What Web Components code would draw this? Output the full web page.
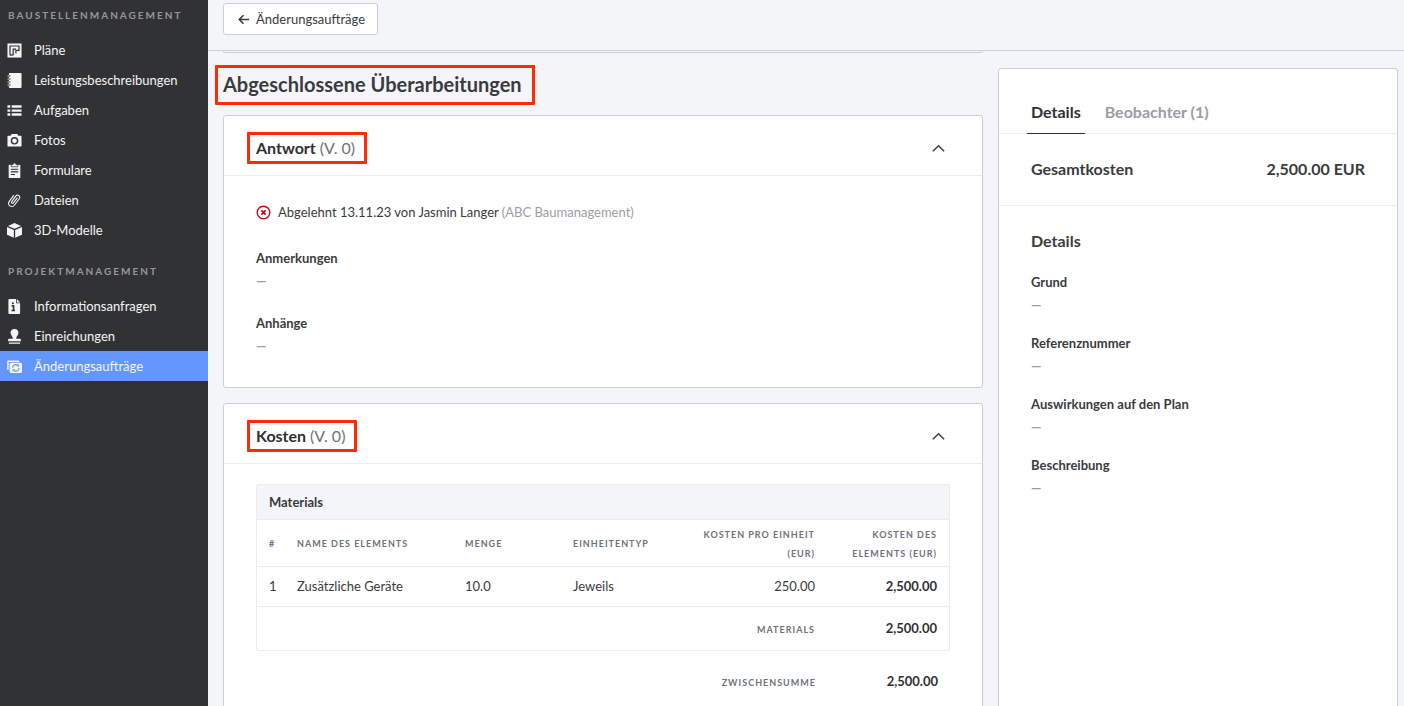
<!DOCTYPE html>
<html lang="de">
<head>
<meta charset="utf-8">
<title>Änderungsaufträge</title>
<style>
body {
    margin: 0;
    font: 13px/20px Lato, "Liberation Sans", sans-serif;
    color: #3a3b3d;
    --dark: #313234;
    --page: #f4f5f8;
    --border: #cdcfd6;
    --line: #ebecee;
    --muted: #9c9da3;
    --label: #6f727b;
    --accent: #6496ff;
    --mark: #ff2a06;
}
</style>
</head>
<body>

<app-shell>
	<side-nav slot="nav">
		<nav-group heading="Baustellenmanagement">
			<nav-item icon="plan">Pläne</nav-item>
			<nav-item icon="book">Leistungsbeschreibungen</nav-item>
			<nav-item icon="list">Aufgaben</nav-item>
			<nav-item icon="camera">Fotos</nav-item>
			<nav-item icon="clipboard">Formulare</nav-item>
			<nav-item icon="clip">Dateien</nav-item>
			<nav-item icon="cube">3D-Modelle</nav-item>
		</nav-group>
		<nav-group heading="Projektmanagement">
			<nav-item icon="info">Informationsanfragen</nav-item>
			<nav-item icon="stamp">Einreichungen</nav-item>
			<nav-item icon="change" active>Änderungsaufträge</nav-item>
		</nav-group>
	</side-nav>

	<back-button slot="bar">Änderungsaufträge</back-button>

	<section-title><mark-frame>Abgeschlossene Überarbeitungen</mark-frame></section-title>

	<content-card heading="Antwort" version="(V. 0)">
		<status-line company="(ABC Baumanagement)">Abgelehnt 13.11.23 von Jasmin Langer</status-line>
		<field-item label="Anmerkungen">—</field-item>
		<field-item label="Anhänge">—</field-item>
	</content-card>

	<content-card heading="Kosten" version="(V. 0)" compact>
		<cost-table></cost-table>
	</content-card>

	<details-panel slot="aside">
		<field-item label="Grund">—</field-item>
		<field-item label="Referenznummer">—</field-item>
		<field-item label="Auswirkungen auf den Plan">—</field-item>
		<field-item label="Beschreibung">—</field-item>
	</details-panel>
</app-shell>

<template id="app-shell-tpl">
<style>
:host {
    display: grid;
    grid-template-columns: 208px minmax(0, 1fr);
    height: 100vh;
    overflow: hidden;
    background: var(--page);
}
.page {
    display: flex;
    flex-direction: column;
    min-height: 0;
}
header {
    padding: 3px 15px 15px;
    border-bottom: 1px solid var(--border);
}
.scroll {
    flex: 1;
    min-height: 0;
    overflow-y: auto;
    scrollbar-width: none;
    display: grid;
    grid-template-columns: minmax(0, 1fr) 400px;
    gap: 15px;
    padding: 0 6px 0 15px;
}
main {
    padding-bottom: 32px;
}
/* lower edge of the card that is scrolled away */
.previous {
    height: 1px;
    border: 1px solid var(--border);
    border-top: 0;
    border-radius: 0 0 3px 3px;
}
.side {
    display: flex;
    padding: 17px 0 32px;
}
</style>
<slot name="nav"></slot>
<div class="page">
	<header><slot name="bar"></slot></header>
	<div class="scroll">
		<main>
			<div class="previous"></div>
			<slot></slot>
		</main>
		<div class="side"><slot name="aside"></slot></div>
	</div>
</div>
</template>

<template id="side-nav-tpl">
<style>
:host {
    display: block;
    background: var(--dark);
}
nav {
    display: flex;
    flex-direction: column;
    gap: 11px;
}
</style>
<nav><slot></slot></nav>
</template>

<template id="nav-group-tpl">
<style>
:host {
    display: block;
}
h2 {
    margin: 0 0 5px;
    padding-left: 8px;
    font-size: 10px;
    line-height: 30px;
    font-weight: 700;
    letter-spacing: 2px;
    text-transform: uppercase;
    white-space: nowrap;
    color: #96979b;
}
</style>
<h2></h2>
<slot></slot>
</template>

<template id="nav-item-tpl">
<style>
:host {
    display: block;
}
a {
    display: flex;
    align-items: center;
    gap: 12px;
    height: 30px;
    padding-left: 7px;
    color: #f4f4f5;
    text-decoration: none;
    white-space: nowrap;
    --cut: var(--dark);
}
:host([active]) a {
    background: var(--accent);
    --cut: var(--accent);
}
</style>
<a href="#"><app-icon></app-icon><span><slot></slot></span></a>
</template>

<template id="back-button-tpl">
<style>
:host {
    display: flex;
}
button {
    display: flex;
    align-items: center;
    gap: 5px;
    height: 32px;
    padding: 0 12px;
    border: 1px solid var(--border);
    border-radius: 3px;
    background: #fff;
    font: inherit;
    color: inherit;
}
</style>
<button type="button"><app-icon name="arrow"></app-icon><span><slot></slot></span></button>
</template>

<template id="section-title-tpl">
<style>
:host {
    display: block;
}
h1 {
    margin: 0;
    padding: 17px 0;
    font-size: 20px;
    line-height: 28px;
    font-weight: 700;
}
</style>
<h1><slot></slot></h1>
</template>

<template id="mark-frame-tpl">
<style>
:host {
    display: inline-block;
    position: relative;
}
:host::after {
    content: "";
    position: absolute;
    inset: -5px -13px -7px -8px;
    border: 3px solid var(--mark);
    border-radius: 1px;
    pointer-events: none;
}
:host([small])::after {
    inset: -4px -12px -4px -9px;
}
</style>
<slot></slot>
</template>

<template id="content-card-tpl">
<style>
:host {
    display: block;
    margin-bottom: 15px;
    border: 1px solid var(--border);
    border-radius: 3px;
    background: #fff;
}
header {
    display: flex;
    align-items: center;
    justify-content: space-between;
    box-sizing: border-box;
    height: 60px;
    padding: 5px 32px 0;
    border-bottom: 1px solid var(--line);
}
h2 {
    margin: 0;
    font-size: 16px;
    line-height: 24px;
    font-weight: 700;
    color: #2f3033;
}
.version {
    font-weight: 400;
    color: var(--label);
}
button {
    display: flex;
    padding: 4px;
    border: 0;
    background: none;
    color: inherit;
}
.body {
    display: flex;
    flex-direction: column;
    gap: 22px;
    padding: 26px 32px 31px;
}
:host([compact]) .body {
    padding: 20px 32px 32px;
}
</style>
<header>
	<h2><mark-frame small><span class="heading"></span> <span class="version"></span></mark-frame></h2>
	<button type="button" aria-label="Einklappen"><app-icon name="chevron"></app-icon></button>
</header>
<div class="body"><slot></slot></div>
</template>

<template id="status-line-tpl">
<style>
:host {
    display: flex;
    align-items: center;
    gap: 7px;
    padding-bottom: 4px;
}
app-icon {
    color: #d0021b;
}
.company {
    color: var(--muted);
}
</style>
<app-icon name="rejected"></app-icon>
<span><slot></slot> <span class="company"></span></span>
</template>

<template id="field-item-tpl">
<style>
:host {
    display: block;
}
dl, dd {
    margin: 0;
}
dt {
    font-weight: 700;
}
dd {
    padding-top: 3px;
    font-weight: 700;
    color: var(--muted);
}
</style>
<dl>
	<dt></dt>
	<dd><slot></slot></dd>
</dl>
</template>

<template id="cost-table-tpl">
<style>
:host {
    display: block;
}
.box {
    border: 1px solid var(--line);
    border-radius: 2px;
}
table {
    width: 100%;
    table-layout: fixed;
    border-collapse: collapse;
}
.num { width: 28px; }
.amount { width: 108px; }
.unit { width: 128px; }
.price { width: 138px; }
.total { width: 122px; }
caption {
    height: 34px;
    padding-left: 12px;
    border-bottom: 1px solid var(--line);
    background: var(--page);
    line-height: 34px;
    font-weight: 700;
    text-align: left;
}
th, td {
    box-sizing: border-box;
    padding: 0 12px;
    text-align: left;
    white-space: nowrap;
}
th {
    padding-top: 2px;
    font-size: 9px;
    line-height: 19px;
    font-weight: 700;
    letter-spacing: 1px;
    text-transform: uppercase;
    color: var(--label);
}
thead th.right {
    white-space: normal;
}
thead tr { height: 46px; }
tbody tr { height: 40px; }
tfoot tr { height: 44px; }
tbody tr, tfoot tr {
    border-top: 1px solid var(--line);
}
.right {
    text-align: right;
}
.strong {
    font-weight: 700;
    color: #2f3033;
}
.num-cell {
    padding-right: 0;
}
.sum {
    margin-top: 8px;
}
.sum tr {
    border: 0;
}
</style>
<div class="box">
	<table>
		<caption>Materials</caption>
		<colgroup><col class="num"><col><col class="amount"><col class="unit"><col class="price"><col class="total"></colgroup>
		<thead>
			<tr>
				<th class="num-cell" scope="col">#</th>
				<th scope="col">Name des Elements</th>
				<th scope="col">Menge</th>
				<th scope="col">Einheitentyp</th>
				<th class="right" scope="col">Kosten pro Einheit (EUR)</th>
				<th class="right" scope="col">Kosten des Elements (EUR)</th>
			</tr>
		</thead>
		<tbody>
			<tr>
				<td class="num-cell">1</td>
				<td>Zusätzliche Geräte</td>
				<td>10.0</td>
				<td>Jeweils</td>
				<td class="right">250.00</td>
				<td class="right strong">2,500.00</td>
			</tr>
		</tbody>
		<tfoot>
			<tr>
				<th class="right" scope="row" colspan="5">Materials</th>
				<td class="right strong">2,500.00</td>
			</tr>
		</tfoot>
	</table>
</div>
<table class="sum">
	<colgroup><col><col class="total"></colgroup>
	<tfoot>
		<tr>
			<th class="right" scope="row">Zwischensumme</th>
			<td class="right strong">2,500.00</td>
		</tr>
	</tfoot>
</table>
</template>

<template id="details-panel-tpl">
<style>
:host {
    display: block;
    flex: 1;
    border: 1px solid var(--border);
    border-radius: 3px;
    background: #fff;
    font-size: 16px;
    line-height: 24px;
    font-weight: 700;
}
.tabs {
    display: flex;
    gap: 16px;
    padding: 31px 28px 0;
    border-bottom: 1px solid var(--line);
}
button {
    margin-bottom: -1px;
    padding: 0 4px 9px;
    border: 0;
    border-bottom: 1px solid transparent;
    background: none;
    font: inherit;
    color: var(--muted);
}
button[aria-selected="true"] {
    border-color: #2f3033;
    color: #2f3033;
}
.total {
    display: flex;
    justify-content: space-between;
    padding: 23px 32px 24px;
    border-bottom: 1px solid var(--line);
}
.list {
    display: flex;
    flex-direction: column;
    gap: 19px;
    padding: 23px 32px;
}
h2 {
    margin: 0;
    font: inherit;
}
.fields {
    display: flex;
    flex-direction: column;
    gap: 18px;
    font-size: 13px;
    line-height: 20px;
}
</style>
<div class="tabs" role="tablist">
	<button type="button" role="tab" aria-selected="true">Details</button>
	<button type="button" role="tab" aria-selected="false">Beobachter (1)</button>
</div>
<div class="total"><span>Gesamtkosten</span><span>2,500.00 EUR</span></div>
<div class="list">
	<h2>Details</h2>
	<div class="fields"><slot></slot></div>
</div>
</template>

<script>
// 16x16 drawings; --cut is the colour behind the icon
const ICONS = {
	plan: '<path d="M0.500 0.500h15v15H0.500z"/><path d="M3.200 13V3.200h9.600v4.600H9.500v3.500M6.600 13V6.500h3" fill="none" stroke="var(--cut)" stroke-width="1.300"/><path d="M3.200 12.800h3.400" stroke="var(--cut)" stroke-width="1.300"/>',
	book: '<path d="M3 0h11.500a1 1 0 0 1 1 1v14a1 1 0 0 1-1 1H3a1 1 0 0 1-1-1V1a1 1 0 0 1 1-1z"/><path d="M0.500 3.200h3M0.500 6.400h3M0.500 9.600h3M0.500 12.800h3" stroke="var(--cut)" stroke-width="2"/><path d="M0.500 3.200h3M0.500 6.400h3M0.500 9.600h3M0.500 12.800h3" stroke="currentColor" stroke-width="1"/>',
	list: '<path d="M0.500 2.500h3v2.500h-3zM5 2.500h10.500v2.500H5zM0.500 6.800h3v2.500h-3zM5 6.800h10.500v2.500H5zM0.500 11h3v2.500h-3zM5 11h10.500v2.500H5z"/>',
	camera: '<path d="M1.500 3H4L5 1h6l1 2h2.500a1 1 0 0 1 1 1v9.500a1 1 0 0 1-1 1h-13a1 1 0 0 1-1-1V4a1 1 0 0 1 1-1z"/><circle cx="8" cy="8.300" r="3.300" fill="none" stroke="var(--cut)" stroke-width="1.500"/>',
	clipboard: '<path d="M1.800 2h12.400v14H1.800z"/><path d="M4.500 1.500h2a1.500 1.500 0 0 1 3 0h2v2.500h-7z" stroke="var(--cut)" stroke-width="0.800"/><path d="M4 6.700h8M4 9.500h8M4 12.300h4.500" stroke="var(--cut)" stroke-width="1.200"/>',
	clip: '<path d="M10.800 5.500 6.900 10.600a1.200 1.200 0 0 1-1.900-1.500L9.400 3.300a2.300 2.300 0 0 1 3.700 2.800L7.800 13.100a3.400 3.400 0 0 1-5.400-4.200L7 2.800" fill="none" stroke="currentColor" stroke-width="1.200" stroke-linecap="round" stroke-linejoin="round"/>',
	cube: '<path d="M8 0 15 3.100 8 6.200 1 3.100zM0 4.200 7.300 7.500v8.300L0 12.500zM16 4.200 8.700 7.500v8.300l7.300-3.300z"/>',
	info: '<path d="M2.500 0h7.300v4.500h4.200v10.500a1 1 0 0 1-1 1H2.500a1 1 0 0 1-1-1V1a1 1 0 0 1 1-1z"/><path d="M10.700 0.200 14 3.600h-3.300z"/><path d="M5 7.300h2v4.700M4.800 12.300h3.700" fill="none" stroke="var(--cut)" stroke-width="1.700"/><circle cx="6.300" cy="4.600" r="1.100" fill="var(--cut)"/>',
	stamp: '<path d="M8 0a4 4 0 0 1 4.200 4.200C12.200 6.300 9.800 7.800 9.800 10.300h4a1 1 0 0 1 1 1v1.700H1.200v-1.700a1 1 0 0 1 1-1h4C6.200 7.800 3.800 6.300 3.800 4.200A4 4 0 0 1 8 0zM2 14.300h12v1.500H2z"/>',
	change: '<path d="M1 11.500V2.300h12" fill="none" stroke="currentColor" stroke-width="1.600" stroke-linejoin="round"/><rect x="2.800" y="4" width="13.200" height="11" rx="1.500"/><path d="M6 9.300a3.400 3.400 0 0 1 6-2.100M12.900 9.700a3.400 3.400 0 0 1-6 2.100" fill="none" stroke="var(--cut)" stroke-width="1.300"/><path d="M12.900 5.500v2.600h-2.600zM6 13.500v-2.600h2.600z" fill="var(--cut)"/>',
	arrow: '<path d="M14 8H3.500M8 3.500 3.500 8l4.500 4.500" fill="none" stroke="currentColor" stroke-width="1.700"/>',
	chevron: '<path d="M2 11 8 5l6 6" fill="none" stroke="currentColor" stroke-width="1.500"/>',
	rejected: '<circle cx="8" cy="8" r="6.700" fill="none" stroke="currentColor" stroke-width="1.500"/><path d="M5.800 5.800 10.200 10.200M10.200 5.800 5.800 10.200" stroke="currentColor" stroke-width="1.800"/>'
};

class AppIcon extends HTMLElement {
	connectedCallback() {
		if (this.shadowRoot) return;
		this.attachShadow({mode: 'open'}).innerHTML = `
			<style>
			:host { display: block; width: 15px; height: 15px; flex: none; }
			svg { display: block; width: 100%; height: 100%; fill: currentColor; }
			</style>
			<svg viewBox="0 0 16 16" aria-hidden="true">${ICONS[this.getAttribute('name')] || ''}</svg>`;
	}
}

// clones the template that is named after the element
class TemplateElement extends HTMLElement {
	connectedCallback() {
		if (this.shadowRoot) return;
		let tmpl = document.querySelector('#' + this.localName + '-tpl');
		let clone = tmpl.content.cloneNode(true);
		this.fill(clone);
		this.attachShadow({mode: 'open'}).appendChild(clone);
	}
	fill(root) {}
}

class NavGroup extends TemplateElement {
	fill(root) {
		root.querySelector('h2').textContent = this.getAttribute('heading');
	}
}

class NavItem extends TemplateElement {
	fill(root) {
		root.querySelector('app-icon').setAttribute('name', this.getAttribute('icon'));
		if (this.hasAttribute('active')) {
			root.querySelector('a').setAttribute('aria-current', 'page');
		}
	}
}

class ContentCard extends TemplateElement {
	fill(root) {
		root.querySelector('.heading').textContent = this.getAttribute('heading');
		root.querySelector('.version').textContent = this.getAttribute('version');
		let body = root.querySelector('.body');
		root.querySelector('button').addEventListener('click', () => {
			body.style.display = body.style.display == 'none' ? '' : 'none';
		});
	}
}

class StatusLine extends TemplateElement {
	fill(root) {
		root.querySelector('.company').textContent = this.getAttribute('company');
	}
}

class FieldItem extends TemplateElement {
	fill(root) {
		root.querySelector('dt').textContent = this.getAttribute('label');
	}
}

customElements.define('app-icon', AppIcon);
customElements.define('mark-frame', class extends TemplateElement {});
customElements.define('app-shell', class extends TemplateElement {});
customElements.define('side-nav', class extends TemplateElement {});
customElements.define('nav-group', NavGroup);
customElements.define('nav-item', NavItem);
customElements.define('back-button', class extends TemplateElement {});
customElements.define('section-title', class extends TemplateElement {});
customElements.define('content-card', ContentCard);
customElements.define('status-line', StatusLine);
customElements.define('field-item', FieldItem);
customElements.define('cost-table', class extends TemplateElement {});
customElements.define('details-panel', class extends TemplateElement {});
</script>
</body>
</html>
